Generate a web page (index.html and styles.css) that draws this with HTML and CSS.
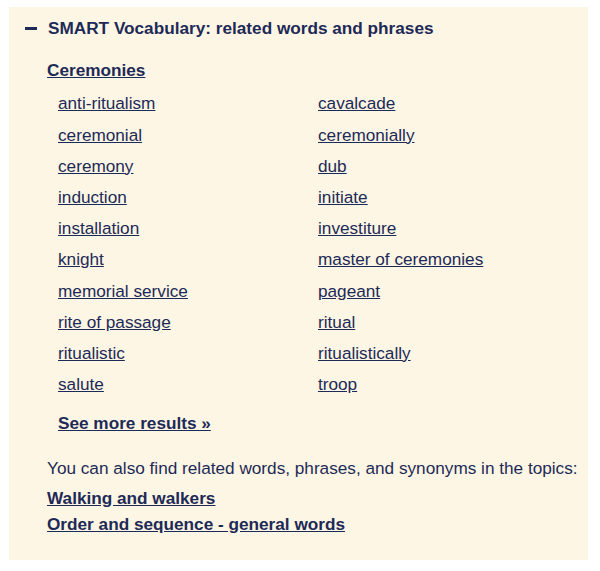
FILE: index.html
```html
<!DOCTYPE html>
<html lang="en">
<head>
<meta charset="utf-8">
<title>SMART Vocabulary</title>
<link rel="stylesheet" href="styles.css">
</head>
<body>
<section class="smart">
  <h2 class="smart-title"><span class="toggle" aria-hidden="true"></span>SMART Vocabulary: related words and phrases</h2>
  <div class="topic">
    <a class="topic-name" href="#">Ceremonies</a>
    <ul class="words">
      <li><a href="#">anti-ritualism</a></li>
      <li><a href="#">cavalcade</a></li>
      <li><a href="#">ceremonial</a></li>
      <li><a href="#">ceremonially</a></li>
      <li><a href="#">ceremony</a></li>
      <li><a href="#">dub</a></li>
      <li><a href="#">induction</a></li>
      <li><a href="#">initiate</a></li>
      <li><a href="#">installation</a></li>
      <li><a href="#">investiture</a></li>
      <li><a href="#">knight</a></li>
      <li><a href="#">master of ceremonies</a></li>
      <li><a href="#">memorial service</a></li>
      <li><a href="#">pageant</a></li>
      <li><a href="#">rite of passage</a></li>
      <li><a href="#">ritual</a></li>
      <li><a href="#">ritualistic</a></li>
      <li><a href="#">ritualistically</a></li>
      <li><a href="#">salute</a></li>
      <li><a href="#">troop</a></li>
    </ul>
    <a class="more" href="#">See more results »</a>
  </div>
  <p class="also">You can also find related words, phrases, and synonyms in the topics:</p>
  <ul class="topics">
    <li><a href="#">Walking and walkers</a></li>
    <li><a href="#">Order and sequence - general words</a></li>
  </ul>
</section>
</body>
</html>
```
FILE: styles.css
```css
html, body {
  margin: 0;
  padding: 0;
  background: #fff;
}
body {
  font-family: "Liberation Sans", Arial, sans-serif;
  color: #1d2a57;
}
a {
  color: #1d2a57;
  text-decoration: underline;
}
.smart {
  margin: 7px 12px 11px 9px;
  background: #fdf6e4;
  padding: 9px 4px 23px 16px;
}
.smart-title {
  display: flex;
  align-items: center;
  margin: 0;
  font-size: 17.2px;
  font-weight: bold;
  line-height: 24px;
}
.toggle {
  display: inline-block;
  width: 12px;
  height: 3px;
  background: #1d2a57;
  margin: 0 11px 0 0;
}
.topic {
  padding-left: 22px;
  margin-top: 18px;
}
.topic-name {
  display: block;
  font-size: 17.2px;
  font-weight: bold;
  line-height: 24px;
}
.words {
  list-style: none;
  margin: 6.4px 0 0 0;
  padding: 0 0 0 11px;
  display: grid;
  grid-template-columns: 260px 1fr;
  grid-auto-rows: 31.2px;
  font-size: 17.2px;
  line-height: 31.2px;
}
.more {
  display: block;
  margin: 10.6px 0 0 11px;
  font-size: 17.2px;
  font-weight: bold;
  line-height: 24px;
}
.also {
  margin: 21px 0 0 22px;
  font-size: 17.2px;
  line-height: 24px;
  white-space: nowrap;
}
.topics {
  list-style: none;
  margin: 5px 0 0 22px;
  padding: 0;
  font-size: 17.2px;
  font-weight: bold;
  line-height: 26px;
}
```
